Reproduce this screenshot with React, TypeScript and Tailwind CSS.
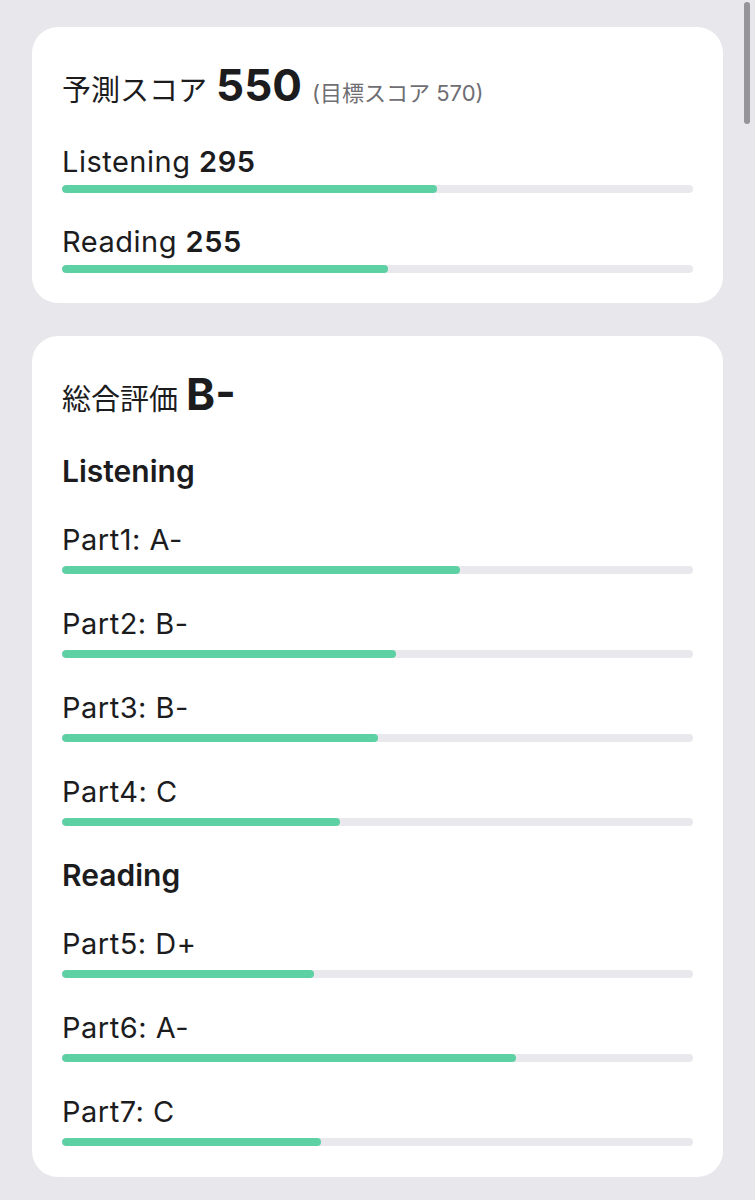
import React from "react";

const font = { fontFamily: 'Inter, "Noto Sans CJK JP", sans-serif' };

function Bar({ pct, gap }: { pct: number; gap: string }) {
  return (
    <div className={`${gap} h-[8px] w-full rounded-full bg-[#e8e8ed] overflow-hidden`}>
      <div className="h-full rounded-full bg-[#5dd0a4]" style={{ width: `${pct}%` }} />
    </div>
  );
}

function Row({
  label,
  pct,
  className,
  gap = "mt-[9px]",
}: {
  label: React.ReactNode;
  pct: number;
  className?: string;
  gap?: string;
}) {
  return (
    <div className={className}>
      <div className="text-[29px] leading-[34px] text-[#1c1c1e] tracking-[0.5px]">{label}</div>
      <Bar pct={pct} gap={gap} />
    </div>
  );
}

function Heading({ children, className }: { children: React.ReactNode; className?: string }) {
  return (
    <div className={`text-[30px] leading-[34px] font-semibold text-[#1c1c1e] ${className ?? ""}`}>{children}</div>
  );
}

export default function App() {
  const listening = [
    { l: "Part1: A-", p: 63 },
    { l: "Part2: B-", p: 53 },
    { l: "Part3: B-", p: 50 },
    { l: "Part4: C", p: 44 },
  ];
  const reading = [
    { l: "Part5: D+", p: 40 },
    { l: "Part6: A-", p: 72 },
    { l: "Part7: C", p: 41 },
  ];
  return (
    <div className="relative min-h-[1200px] w-full bg-[#e7e7ec] px-[32px] pt-[27px] pb-[25px]" style={font}>
      <div className="absolute right-[5px] top-[2px] h-[122px] w-[6px] rounded-full bg-[#959599]" />
      <div className="rounded-[26px] bg-white px-[30px] pt-[36px] pb-[30px]">
        <div className="flex items-baseline h-[44px] text-[#1c1c1e]">
          <span className="text-[29px] leading-none">予測スコア</span>
          <span className="ml-[9px] text-[44px] leading-none font-bold">550</span>
          <span className="ml-[10px] text-[22px] leading-none text-[#6e6e73]">(目標スコア 570)</span>
        </div>
        <Row
          className="mt-[38px]"
          gap="mt-[6px]"
          label={<>Listening <span className="font-semibold">295</span></>}
          pct={59.5}
        />
        <Row
          className="mt-[32px]"
          gap="mt-[6px]"
          label={<>Reading <span className="font-semibold">255</span></>}
          pct={51.6}
        />
      </div>

      <div className="mt-[33px] rounded-[26px] bg-white px-[30px] pt-[36px] pb-[31px]">
        <div className="flex items-baseline h-[44px] text-[#1c1c1e]">
          <span className="text-[29px] leading-none">総合評価</span>
          <span className="ml-[8px] text-[44px] leading-none font-bold">B-</span>
        </div>
        <Heading className="mt-[38px]">Listening</Heading>
        {listening.map((r, i) => (
          <Row key={r.l} className={i === 0 ? "mt-[35px]" : "mt-[33px]"} label={r.l} pct={r.p} />
        ))}
        <Heading className="mt-[32px]">Reading</Heading>
        {reading.map((r, i) => (
          <Row key={r.l} className={i === 0 ? "mt-[35px]" : "mt-[33px]"} label={r.l} pct={r.p} />
        ))}
      </div>
    </div>
  );
}
